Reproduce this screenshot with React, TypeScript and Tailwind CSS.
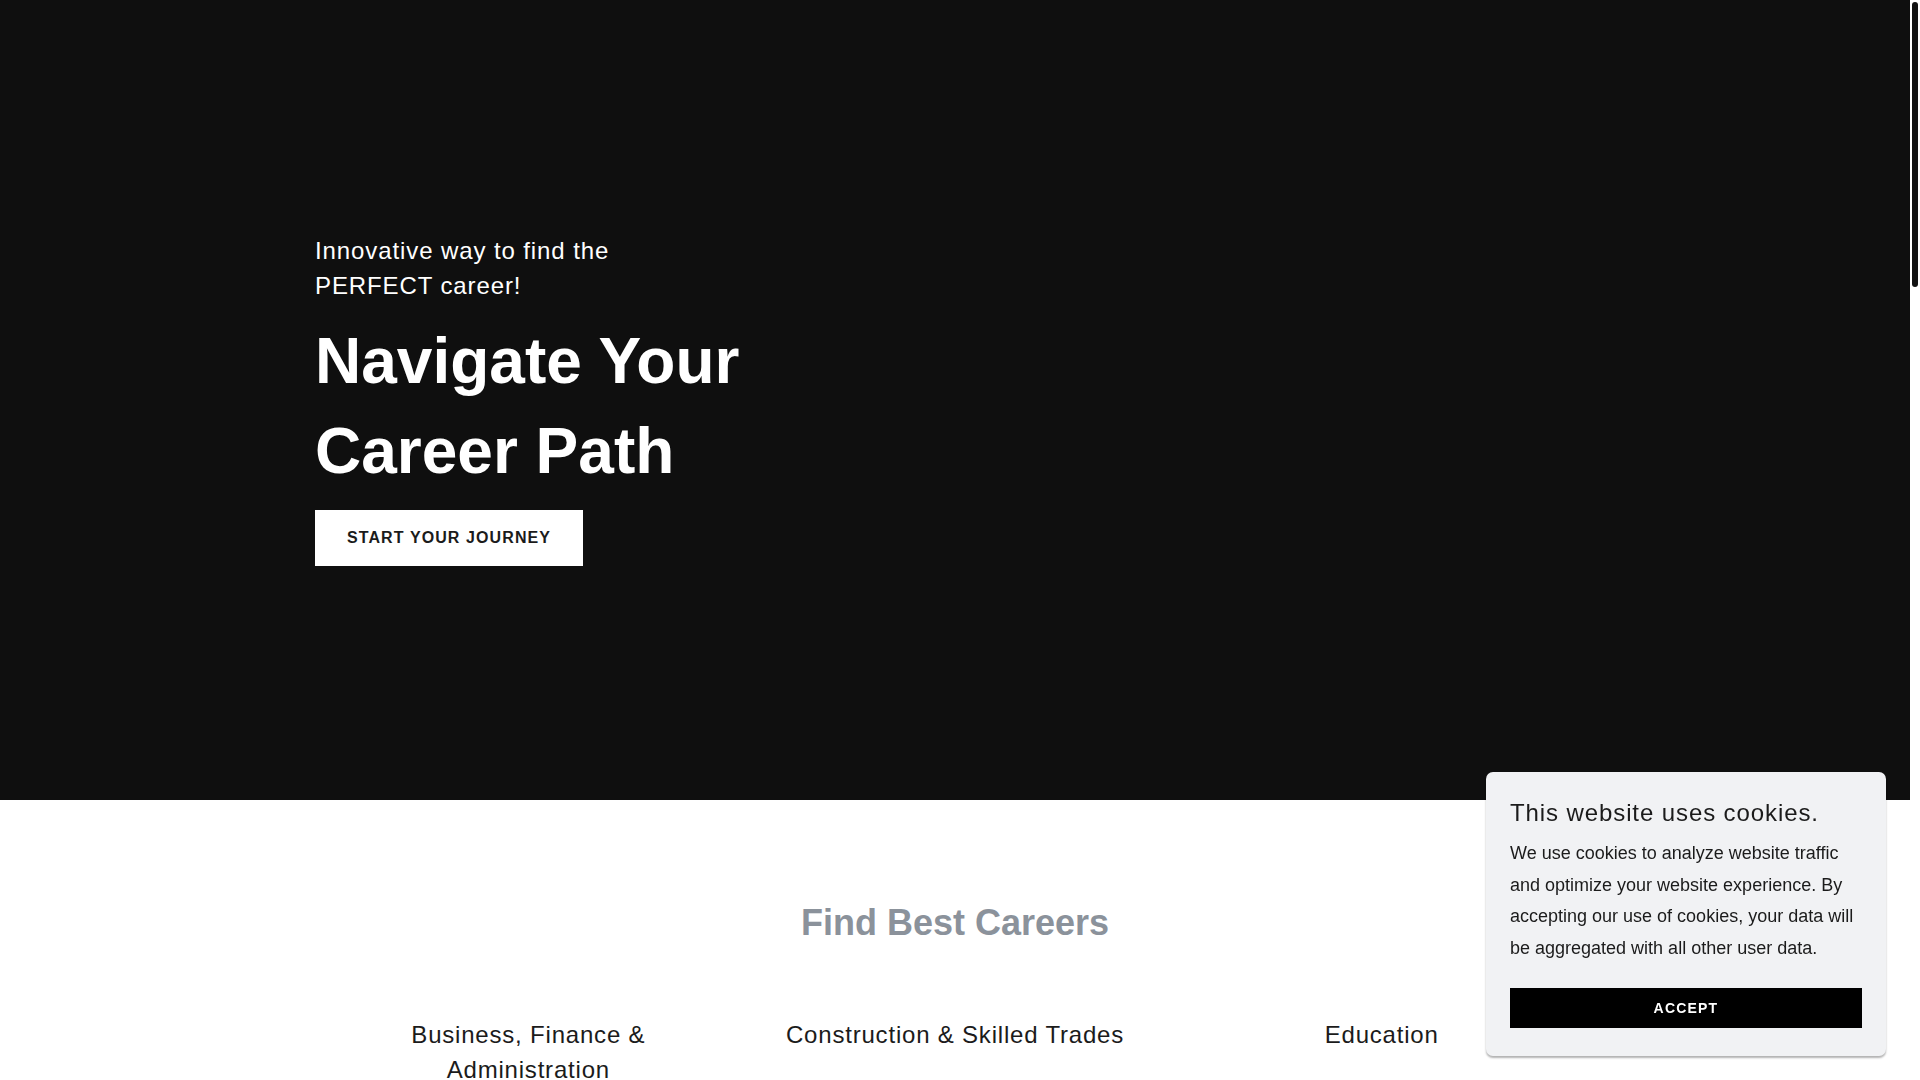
import React from "react";

const careers = [
  "Business, Finance & Administration",
  "Construction & Skilled Trades",
  "Education",
];

function CookieBanner() {
  return (
    <div className="fixed bottom-6 right-[34px] w-[400px] rounded-[7px] bg-[#f1f2f4] px-6 pt-6 pb-7 shadow-[0_2px_2px_rgba(0,0,0,0.3)]">
      <h4 className="text-[24px] leading-[34px] tracking-[0.9px] text-[#1b1b1b]">This website uses cookies.</h4>
      <p className="mt-2 text-[18px] leading-[31.5px] text-[#1b1b1b]">
        We use cookies to analyze website traffic and optimize your website experience. By accepting our use of
        cookies, your data will be aggregated with all other user data.
      </p>
      <button
        type="button"
        className="mt-6 flex h-10 w-full items-center justify-center bg-black text-[14px] font-bold uppercase tracking-[1.2px] text-white"
      >
        Accept
      </button>
    </div>
  );
}

export default function App() {
  return (
    <div className="flex h-screen w-full overflow-hidden bg-white" style={{ fontFamily: "'Liberation Sans', Arial, sans-serif" }}>
      <main className="flex-1 overflow-hidden">
        {/* Hero */}
        <section className="flex h-[800px] items-center bg-[#0f0f0f] pb-[2px]">
          <div className="mx-auto w-full max-w-[1280px]">
            <p className="max-w-[360px] text-[24px] leading-[35px] tracking-[0.9px] text-white">
              Innovative way to find the PERFECT career!
            </p>
            <h1 className="mt-[13px] max-w-[560px] text-[64px] font-bold leading-[90px] text-white">
              Navigate Your Career Path
            </h1>
            <a
              href="#"
              className="mt-[14px] inline-flex h-14 items-center bg-white px-8 text-[16px] font-bold uppercase tracking-[1.1px] text-[#1b1b1b]"
            >
              Start Your Journey
            </a>
          </div>
        </section>

        {/* Careers */}
        <section className="pt-[100px]">
          <div className="mx-auto w-full max-w-[1280px]">
            <h2 className="text-center text-[36px] font-bold leading-[45px] text-[#8b929b]">Find Best Careers</h2>
            <div className="mt-[72px] grid grid-cols-3">
              {careers.map((c) => (
                <div key={c} className="px-8 text-center text-[24px] leading-[35px] tracking-[0.8px] text-[#1b1b1b]">
                  {c}
                </div>
              ))}
            </div>
          </div>
        </section>
      </main>

      {/* scrollbar */}
      <div className="flex w-[10px] shrink-0 flex-col items-center bg-white pt-[2px]">
        <div className="h-[285px] w-[6px] rounded-full bg-[#111]" />
      </div>

      <CookieBanner />
    </div>
  );
}
